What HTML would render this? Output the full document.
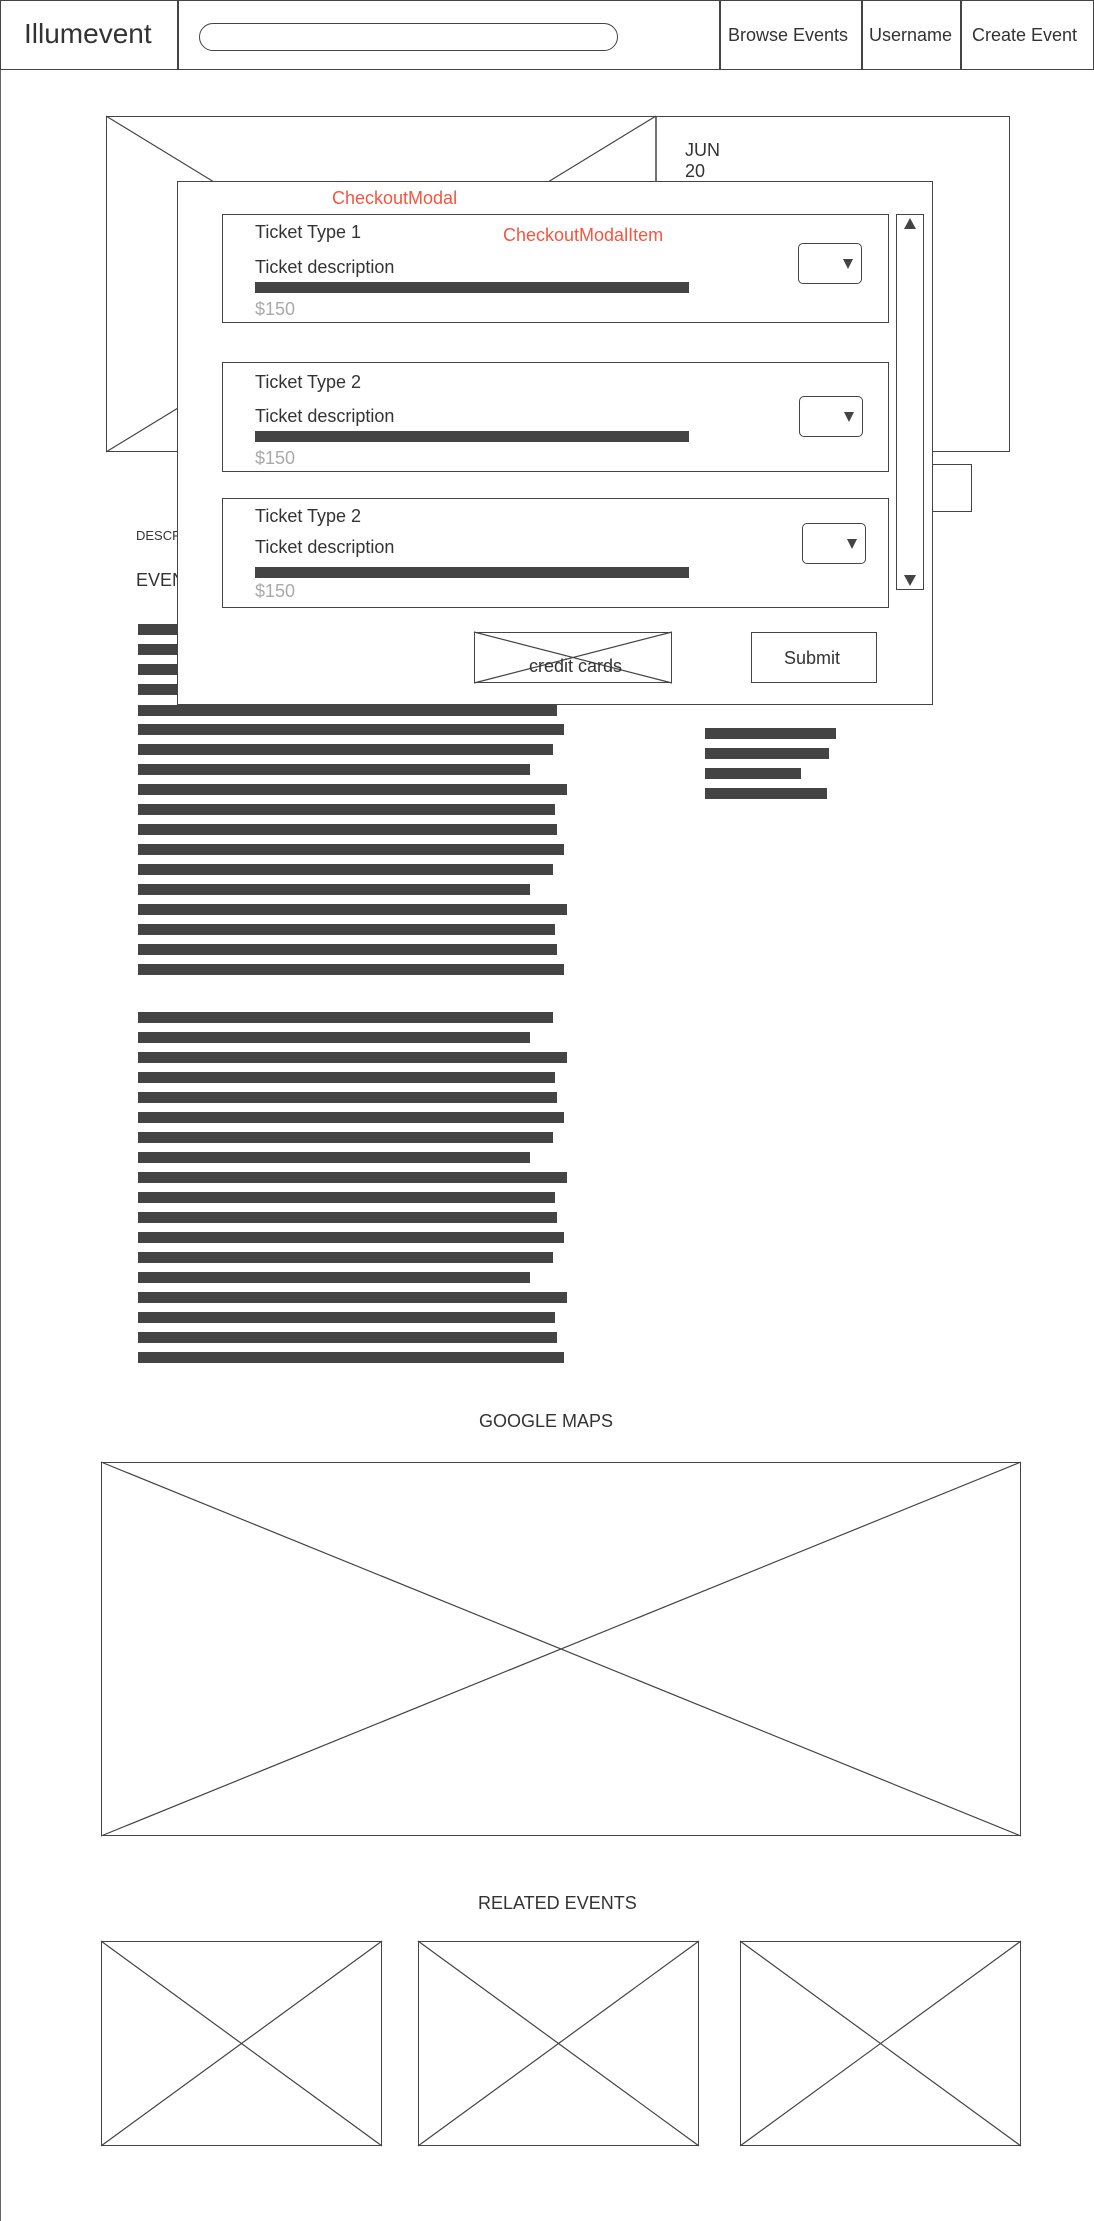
<!DOCTYPE html>
<html><head><meta charset="utf-8"><style>
*{margin:0;padding:0;box-sizing:border-box}
body{width:1094px;height:2221px;position:relative;background:#fff;font-family:"Liberation Sans",sans-serif;color:#333;overflow:hidden}
.a{position:absolute}
.b{position:absolute;border:1.5px solid #444;background:#fff}
.bar{position:absolute;height:11px;background:#444}
.t{position:absolute;white-space:nowrap}
svg{position:absolute;left:0;top:0}
.red{color:#f4563f}
.gray{color:#aaa}
.dd{position:absolute;border:1.5px solid #444;border-radius:5px;width:64px;height:41px;background:#fff}
.dd:after{content:"";position:absolute;right:8px;top:15px;border-left:5px solid transparent;border-right:5px solid transparent;border-top:10px solid #444}
</style></head><body>
<div class="a" style="left:0;top:0;width:1px;height:2221px;background:#666"></div>
<!-- header -->
<div class="b" style="left:0;top:0;width:1094px;height:70px"></div>
<div class="a" style="left:177px;top:0;width:1.5px;height:70px;background:#444"></div>
<div class="t" style="left:24px;top:18px;font-size:28px;color:#333">Illumevent</div>
<div class="a" style="left:199px;top:23px;width:419px;height:28px;border:1.5px solid #444;border-radius:14px"></div>
<div class="a" style="left:719px;top:0;width:1.5px;height:70px;background:#444"></div>
<div class="a" style="left:861px;top:0;width:1.5px;height:70px;background:#444"></div>
<div class="a" style="left:960px;top:0;width:1.5px;height:70px;background:#444"></div>
<div class="t" style="left:728px;top:25px;font-size:18px">Browse Events</div>
<div class="t" style="left:869px;top:25px;font-size:18px">Username</div>
<div class="t" style="left:972px;top:25px;font-size:18px">Create Event</div>
<!-- hero -->
<div class="b" style="left:106px;top:116px;width:904px;height:336px"></div>
<svg width="1094" height="2221" style="position:absolute"><g stroke="#444" stroke-width="1.2" fill="none">
<line x1="106" y1="116" x2="656" y2="452"/><line x1="656" y1="116" x2="106" y2="452"/>
<line x1="656" y1="116" x2="656" y2="452" stroke-width="1.5"/>
</g></svg>
<div class="t" style="left:685px;top:140px;font-size:18px;line-height:21px">JUN<br>20</div>
<div class="b" style="left:900px;top:464px;width:72px;height:48px"></div>
<div class="t" style="left:136px;top:528px;font-size:13px">DESCRIPTION</div>
<div class="t" style="left:136px;top:570px;font-size:18px">EVENT</div>
<div class="bar" style="left:705px;top:728px;width:131px"></div>
<div class="bar" style="left:705px;top:748px;width:124px"></div>
<div class="bar" style="left:705px;top:768px;width:96px"></div>
<div class="bar" style="left:705px;top:788px;width:122px"></div>
<!-- modal -->
<div class="b" style="left:177px;top:181px;width:756px;height:524px"></div>
<div class="t red" style="left:332px;top:188px;font-size:18px">CheckoutModal</div>
<div class="b" style="left:222px;top:214px;width:667px;height:109px"></div>
<div class="b" style="left:222px;top:362px;width:667px;height:110px"></div>
<div class="b" style="left:222px;top:498px;width:667px;height:110px"></div>
<div class="t red" style="left:503px;top:225px;font-size:18px">CheckoutModalItem</div>
<div class="t" style="left:255px;top:222px;font-size:18px">Ticket Type 1</div>
<div class="t" style="left:255px;top:257px;font-size:18px">Ticket description</div>
<div class="bar" style="left:255px;top:282px;width:434px"></div>
<div class="t gray" style="left:255px;top:299px;font-size:18px">$150</div>
<div class="dd" style="left:798px;top:243px"></div>
<div class="t" style="left:255px;top:372px;font-size:18px">Ticket Type 2</div>
<div class="t" style="left:255px;top:406px;font-size:18px">Ticket description</div>
<div class="bar" style="left:255px;top:431px;width:434px"></div>
<div class="t gray" style="left:255px;top:448px;font-size:18px">$150</div>
<div class="dd" style="left:799px;top:396px"></div>
<div class="t" style="left:255px;top:506px;font-size:18px">Ticket Type 2</div>
<div class="t" style="left:255px;top:537px;font-size:18px">Ticket description</div>
<div class="bar" style="left:255px;top:567px;width:434px"></div>
<div class="t gray" style="left:255px;top:581px;font-size:18px">$150</div>
<div class="dd" style="left:802px;top:523px"></div>
<div class="b" style="left:896px;top:214px;width:28px;height:376px"></div>
<div class="a" style="left:904px;top:218px;border-left:6px solid transparent;border-right:6px solid transparent;border-bottom:11px solid #444"></div>
<div class="a" style="left:904px;top:575px;border-left:6px solid transparent;border-right:6px solid transparent;border-top:11px solid #444"></div>
<div class="b" style="left:474px;top:632px;width:198px;height:51px"></div>
<div class="b" style="left:751px;top:632px;width:126px;height:51px"></div>
<div class="t" style="left:784px;top:648px;font-size:18px">Submit</div>
<!-- maps & related -->
<div class="t" style="left:479px;top:1411px;font-size:18px">GOOGLE MAPS</div>
<div class="b" style="left:101px;top:1462px;width:920px;height:374px"></div>
<div class="t" style="left:478px;top:1893px;font-size:18px">RELATED EVENTS</div>
<div class="b" style="left:101px;top:1941px;width:281px;height:205px"></div>
<div class="b" style="left:418px;top:1941px;width:281px;height:205px"></div>
<div class="b" style="left:740px;top:1941px;width:281px;height:205px"></div>
<svg width="1094" height="2221" style="position:absolute"><g stroke="#444" stroke-width="1.2" fill="none">
<line x1="474" y1="632" x2="672" y2="683"/><line x1="672" y1="632" x2="474" y2="683"/>
<line x1="101" y1="1462" x2="1021" y2="1836"/><line x1="1021" y1="1462" x2="101" y2="1836"/>
<line x1="101" y1="1941" x2="382" y2="2146"/><line x1="382" y1="1941" x2="101" y2="2146"/>
<line x1="418" y1="1941" x2="699" y2="2146"/><line x1="699" y1="1941" x2="418" y2="2146"/>
<line x1="740" y1="1941" x2="1021" y2="2146"/><line x1="1021" y1="1941" x2="740" y2="2146"/>
</g></svg>
<div class="t" style="left:529px;top:656px;font-size:18px">credit cards</div>
<div style="position:absolute;left:0;top:0;width:0;height:0">
<div class="bar" style="left:138px;top:1012px;width:415px"></div>
<div class="bar" style="left:138px;top:1032px;width:392px"></div>
<div class="bar" style="left:138px;top:1052px;width:429px"></div>
<div class="bar" style="left:138px;top:1072px;width:417px"></div>
<div class="bar" style="left:138px;top:1092px;width:419px"></div>
<div class="bar" style="left:138px;top:1112px;width:426px"></div>
<div class="bar" style="left:138px;top:1132px;width:415px"></div>
<div class="bar" style="left:138px;top:1152px;width:392px"></div>
<div class="bar" style="left:138px;top:1172px;width:429px"></div>
<div class="bar" style="left:138px;top:1192px;width:417px"></div>
<div class="bar" style="left:138px;top:1212px;width:419px"></div>
<div class="bar" style="left:138px;top:1232px;width:426px"></div>
<div class="bar" style="left:138px;top:1252px;width:415px"></div>
<div class="bar" style="left:138px;top:1272px;width:392px"></div>
<div class="bar" style="left:138px;top:1292px;width:429px"></div>
<div class="bar" style="left:138px;top:1312px;width:417px"></div>
<div class="bar" style="left:138px;top:1332px;width:419px"></div>
<div class="bar" style="left:138px;top:1352px;width:426px"></div>
</div>
<div style="position:absolute;left:0;top:0;width:0;height:0;z-index:-1">
<div class="bar" style="left:138px;top:624px;width:415px"></div>
<div class="bar" style="left:138px;top:644px;width:392px"></div>
<div class="bar" style="left:138px;top:664px;width:429px"></div>
<div class="bar" style="left:138px;top:684px;width:417px"></div>
</div>
<div class="bar" style="left:138px;top:705px;width:419px"></div>
<div class="bar" style="left:138px;top:724px;width:426px"></div>
<div class="bar" style="left:138px;top:744px;width:415px"></div>
<div class="bar" style="left:138px;top:764px;width:392px"></div>
<div class="bar" style="left:138px;top:784px;width:429px"></div>
<div class="bar" style="left:138px;top:804px;width:417px"></div>
<div class="bar" style="left:138px;top:824px;width:419px"></div>
<div class="bar" style="left:138px;top:844px;width:426px"></div>
<div class="bar" style="left:138px;top:864px;width:415px"></div>
<div class="bar" style="left:138px;top:884px;width:392px"></div>
<div class="bar" style="left:138px;top:904px;width:429px"></div>
<div class="bar" style="left:138px;top:924px;width:417px"></div>
<div class="bar" style="left:138px;top:944px;width:419px"></div>
<div class="bar" style="left:138px;top:964px;width:426px"></div>
</body></html>
